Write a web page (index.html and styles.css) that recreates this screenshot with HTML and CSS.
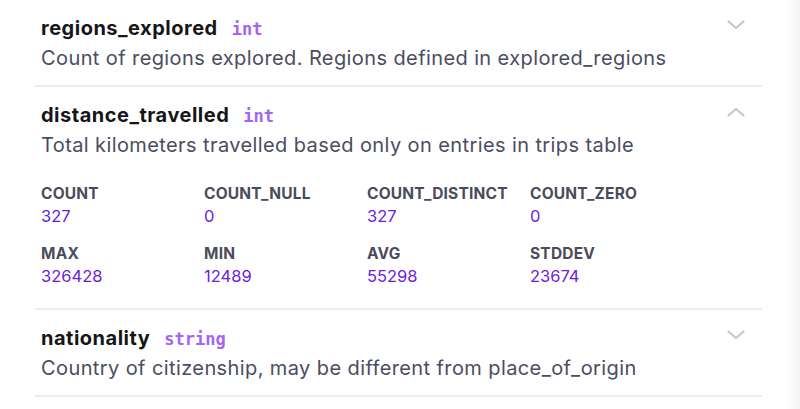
FILE: index.html
```html
<!DOCTYPE html>
<html>
<head>
<meta charset="utf-8">
<link rel="stylesheet" href="styles.css">
</head>
<body>
<div class="list">
  <div class="field">
    <div class="head">
      <div class="title"><span class="name">regions_explored</span><span class="type">int</span></div>
      <svg class="chev" width="18" height="10" viewBox="0 0 18 10"><path d="M1.5 1.5 L9 8 L16.5 1.5" fill="none" stroke="#c6c6d2" stroke-width="2.2" stroke-linecap="round" stroke-linejoin="round"/></svg>
    </div>
    <div class="desc">Count of regions explored. Regions defined in explored_regions</div>
  </div>
  <div class="field">
    <div class="head">
      <div class="title"><span class="name">distance_travelled</span><span class="type">int</span></div>
      <svg class="chev" width="18" height="10" viewBox="0 0 18 10"><path d="M1.5 8.5 L9 2 L16.5 8.5" fill="none" stroke="#c6c6d2" stroke-width="2.2" stroke-linecap="round" stroke-linejoin="round"/></svg>
    </div>
    <div class="desc">Total kilometers travelled based only on entries in trips table</div>
    <div class="stats">
      <div class="stat"><div class="label">COUNT</div><div class="value">327</div></div>
      <div class="stat"><div class="label">COUNT_NULL</div><div class="value">0</div></div>
      <div class="stat"><div class="label">COUNT_DISTINCT</div><div class="value">327</div></div>
      <div class="stat"><div class="label">COUNT_ZERO</div><div class="value">0</div></div>
      <div class="stat"><div class="label">MAX</div><div class="value">326428</div></div>
      <div class="stat"><div class="label">MIN</div><div class="value">12489</div></div>
      <div class="stat"><div class="label">AVG</div><div class="value">55298</div></div>
      <div class="stat"><div class="label">STDDEV</div><div class="value">23674</div></div>
    </div>
  </div>
  <div class="field">
    <div class="head">
      <div class="title"><span class="name">nationality</span><span class="type">string</span></div>
      <svg class="chev" width="18" height="10" viewBox="0 0 18 10"><path d="M1.5 1.5 L9 8 L16.5 1.5" fill="none" stroke="#c6c6d2" stroke-width="2.2" stroke-linecap="round" stroke-linejoin="round"/></svg>
    </div>
    <div class="desc">Country of citizenship, may be different from place_of_origin</div>
  </div>
</div>
</body>
</html>
```

FILE: styles.css
```css
html, body {
  margin: 0;
  padding: 0;
}
body {
  width: 800px;
  height: 409px;
  overflow: hidden;
  background: linear-gradient(to right, #ffffff 787px, #f2f2f4 800px);
  font-family: Inter, "Noto Sans", sans-serif;
}
.list {
  margin-left: 35px;
  width: 727px;
}
.field {
  border-bottom: 2px solid #ececf2;
  padding: 15px 0 13px 6px;
}
.head {
  display: flex;
  justify-content: space-between;
  align-items: flex-start;
}
.title {
  font-size: 20px;
  line-height: 26px;
  display: flex;
  align-items: baseline;
  gap: 14px;
}
.name {
  font-weight: 700;
  letter-spacing: 0.5px;
  color: #161618;
}
.type {
  font-family: "DejaVu Sans Mono", monospace;
  font-weight: 700;
  font-size: 17px;
  color: #a463f2;
}
.chev {
  margin: 5px 17px 0 0;
}
.desc {
  font-size: 20px;
  line-height: 28px;
  letter-spacing: 0.4px;
  color: #4b4c62;
  margin-top: 2px;
}
.stats {
  display: grid;
  grid-template-columns: repeat(4, 163px);
  row-gap: 16px;
  margin-top: 25px;
  padding-bottom: 7px;
}
.label {
  font-weight: 700;
  font-size: 15.5px;
  line-height: 20px;
  letter-spacing: 0.2px;
  color: #4a4b5c;
}
.value {
  font-size: 16.5px;
  line-height: 24px;
  color: #6c22d8;
}
```
